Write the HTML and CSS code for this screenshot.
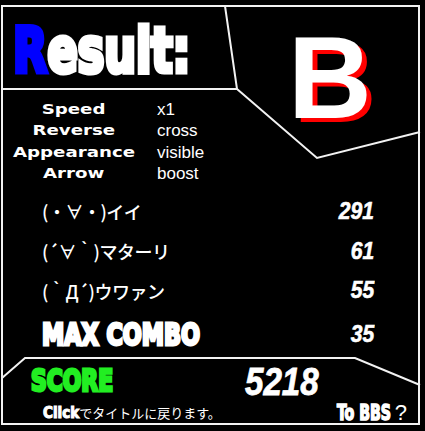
FILE: index.html
```html
<!DOCTYPE html>
<html lang="ja">
<head>
<meta charset="utf-8">
<title>Result</title>
<link rel="stylesheet" href="styles.css">
</head>
<body>
<div class="screen">
  <svg class="frame" width="425" height="431" viewBox="0 0 425 431">
    <rect x="2" y="6" width="417" height="418"/>
    <polyline points="2,89 237,89 225,6"/>
    <polyline points="237,89 317,158 420,132"/>
    <polyline points="2,378 25,358 355,358 420,385"/>
  </svg>
  <div class="top">
    <div class="left">
      <h1 class="title"><span class="title-in"><span class="r">R</span>esult:</span></h1>
      <div class="settings">
        <span class="lab">Speed</span><span class="val">x1</span>
        <span class="lab">Reverse</span><span class="val">cross</span>
        <span class="lab">Appearance</span><span class="val">visible</span>
        <span class="lab">Arrow</span><span class="val">boost</span>
      </div>
    </div>
    <div class="rank">B</div>
  </div>
  <div class="counts">
    <div class="row"><span class="face">(・∀・)イイ</span><span class="num">291</span></div>
    <div class="row"><span class="face">(´∀｀)マターリ</span><span class="num">61</span></div>
    <div class="row"><span class="face">(｀Д´)ウワァン</span><span class="num">55</span></div>
    <div class="row"><span class="combo-lab">MAX COMBO</span><span class="num">35</span></div>
  </div>
  <div class="score">
    <div class="score-row"><span class="score-lab">SCORE</span><span class="score-num">5218</span></div>
    <div class="foot">
      <span class="click"><b>Click</b>でタイトルに戻ります。</span>
      <span class="bbs"><b>To BBS</b> <span class="q">?</span></span>
    </div>
  </div>
</div>
</body>
</html>
```
FILE: styles.css
```css
html, body {
  margin: 0;
  padding: 0;
  background: #000;
}
.screen {
  position: relative;
  width: 425px;
  height: 431px;
  background: #000;
  color: #fff;
  overflow: hidden;
}
.frame {
  position: absolute;
  left: 0;
  top: 0;
}
.frame rect, .frame polyline {
  fill: none;
  stroke: #f2f2f2;
  stroke-width: 2;
}
.top, .counts, .score {
  position: relative;
}
.top {
  display: flex;
  height: 191px;
}
.left {
  width: 288px;
}
.title {
  margin: 0;
  padding: 20px 0 0 13px;
  height: 66px;
  font-family: "DejaVu Sans Condensed", "DejaVu Sans", sans-serif;
  font-stretch: condensed;
  font-weight: bold;
  font-size: 62px;
  line-height: 62px;
  -webkit-text-stroke: 5px #fff;
}
.title-in {
  display: inline-block;
  transform: scaleX(0.80);
  transform-origin: left center;
  white-space: nowrap;
}
.r {
  color: #0000ff;
  -webkit-text-stroke: 5px #0000ff;
}
.settings {
  display: grid;
  grid-template-columns: 148px auto;
  column-gap: 9px;
  grid-auto-rows: 21.3px;
  align-items: center;
  margin-top: 13px;
}
.lab {
  justify-self: center;
  font-family: "DejaVu Sans", sans-serif;
  font-weight: bold;
  font-size: 14px;
  line-height: 21px;
  transform: scaleX(1.3);
  white-space: nowrap;
}
.val {
  font-family: "Liberation Sans", Arial, sans-serif;
  font-size: 17px;
  line-height: 21px;
}
.rank {
  padding-top: 20px;
  font-family: "Liberation Sans", Arial, sans-serif;
  font-weight: bold;
  font-size: 116px;
  line-height: 116px;
  text-shadow: 5px 4px 0 #ff0000;
}
.counts {
  display: grid;
  grid-template-rows: 40px 40px 39px 48px;
}
.row {
  display: flex;
  justify-content: space-between;
  align-items: center;
  padding: 0 51px 0 42px;
}
.face {
  font-family: "Noto Sans CJK JP", sans-serif;
  font-weight: 500;
  font-size: 18px;
  letter-spacing: -0.5px;
  line-height: 1;
  white-space: nowrap;
}
.num {
  font-family: "Liberation Sans", Arial, sans-serif;
  font-style: italic;
  font-weight: bold;
  font-size: 24.5px;
  line-height: 1;
  transform: scaleX(0.86);
  transform-origin: right center;
  -webkit-text-stroke: 0.6px #fff;
}
.combo-lab {
  font-family: "DejaVu Sans Condensed", "DejaVu Sans", sans-serif;
  font-stretch: condensed;
  font-weight: bold;
  font-size: 31px;
  line-height: 1;
  transform: scaleX(0.80);
  transform-origin: left center;
  white-space: nowrap;
  -webkit-text-stroke: 3px #fff;
}
.score {
  display: grid;
  grid-template-rows: 46px 18px;
}
.score-row {
  display: grid;
  grid-template-columns: 214px auto;
  align-items: center;
  padding-left: 31px;
}
.score-lab {
  justify-self: start;
  color: #22ee22;
  font-family: "DejaVu Sans Condensed", "DejaVu Sans", sans-serif;
  font-stretch: condensed;
  font-weight: bold;
  font-size: 30px;
  line-height: 1;
  transform: scaleX(0.81);
  transform-origin: left center;
  -webkit-text-stroke: 3px #22ee22;
}
.score-num {
  justify-self: start;
  font-family: "Liberation Sans", Arial, sans-serif;
  font-style: italic;
  font-weight: bold;
  font-size: 39px;
  line-height: 1;
  transform: scaleX(0.85);
  transform-origin: left center;
  -webkit-text-stroke: 0.8px #fff;
}
.foot {
  display: flex;
  justify-content: space-between;
  align-items: center;
  padding: 0 18px 0 43px;
}
.click {
  font-family: "Noto Sans CJK JP", sans-serif;
  font-size: 13px;
  line-height: 1;
  white-space: nowrap;
}
.click b {
  font-family: "DejaVu Sans Condensed", "DejaVu Sans", sans-serif;
  font-stretch: condensed;
  font-weight: bold;
  font-size: 15px;
  -webkit-text-stroke: 1px #fff;
}
.bbs {
  white-space: nowrap;
  line-height: 1;
}
.bbs b {
  display: inline-block;
  font-family: "DejaVu Sans Condensed", "DejaVu Sans", sans-serif;
  font-stretch: condensed;
  font-weight: bold;
  font-size: 21px;
  transform: scaleX(0.75);
  transform-origin: right center;
  -webkit-text-stroke: 1.5px #fff;
}
.q {
  font-family: "Liberation Sans", Arial, sans-serif;
  font-size: 22px;
}
```
